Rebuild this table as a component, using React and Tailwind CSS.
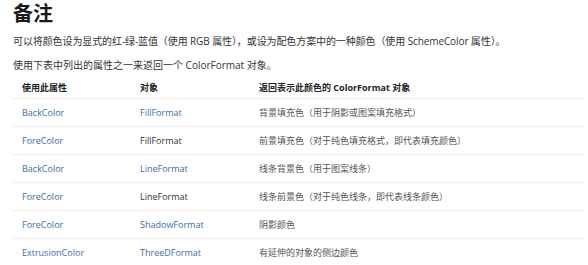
const rows = [
  { prop: "BackColor", obj: "FillFormat", objLink: true, desc: "背景填充色（用于阴影或图案填充格式）" },
  { prop: "ForeColor", obj: "FillFormat", objLink: false, desc: "前景填充色（对于纯色填充格式，即代表填充颜色）" },
  { prop: "BackColor", obj: "LineFormat", objLink: true, desc: "线条背景色（用于图案线条）" },
  { prop: "ForeColor", obj: "LineFormat", objLink: false, desc: "线条前景色（对于纯色线条，即代表线条颜色）" },
  { prop: "ForeColor", obj: "ShadowFormat", objLink: true, desc: "阴影颜色" },
  { prop: "ExtrusionColor", obj: "ThreeDFormat", objLink: true, desc: "有延伸的对象的侧边颜色" },
];

export default function App() {
  return (
    <div className="w-[588px] h-[265px] overflow-hidden bg-white text-[#222] font-['Open_Sans','Noto_Sans_CJK_SC',sans-serif]">
      <div className="pl-[13px] pt-[1px]">
        <h2 className="text-[20px] font-bold leading-[26px] text-[#1a1a1a]">备注</h2>
        <p className="mt-[7px] text-[10px] leading-[14px] text-[#333] tracking-[-0.1px]">
          可以将颜色设为显式的红-绿-蓝值（使用 RGB 属性），或设为配色方案中的一种颜色（使用 SchemeColor 属性）。
        </p>
        <p className="mt-[10px] text-[10px] leading-[14px] text-[#333]">
          使用下表中列出的属性之一来返回一个 ColorFormat 对象。
        </p>
      </div>
      <div className="mt-[5px] ml-[12px] mr-[3px] text-[9px]">
        <div className="grid grid-cols-[118px_119px_1fr] h-[21px] items-center pl-[10px] font-bold text-[#222]">
          <div>使用此属性</div>
          <div>对象</div>
          <div>返回表示此颜色的 ColorFormat 对象</div>
        </div>
        {rows.map((r, i) => (
          <div
            key={i}
            className="grid grid-cols-[118px_119px_1fr] h-[28px] items-center pl-[10px] border-t border-[#eeeeee]"
          >
            <div className="text-[#3b6ea5]">{r.prop}</div>
            <div className={r.objLink ? "text-[#3b6ea5]" : "text-[#333]"}>{r.obj}</div>
            <div className="text-[#555]">{r.desc}</div>
          </div>
        ))}
      </div>
    </div>
  );
}
